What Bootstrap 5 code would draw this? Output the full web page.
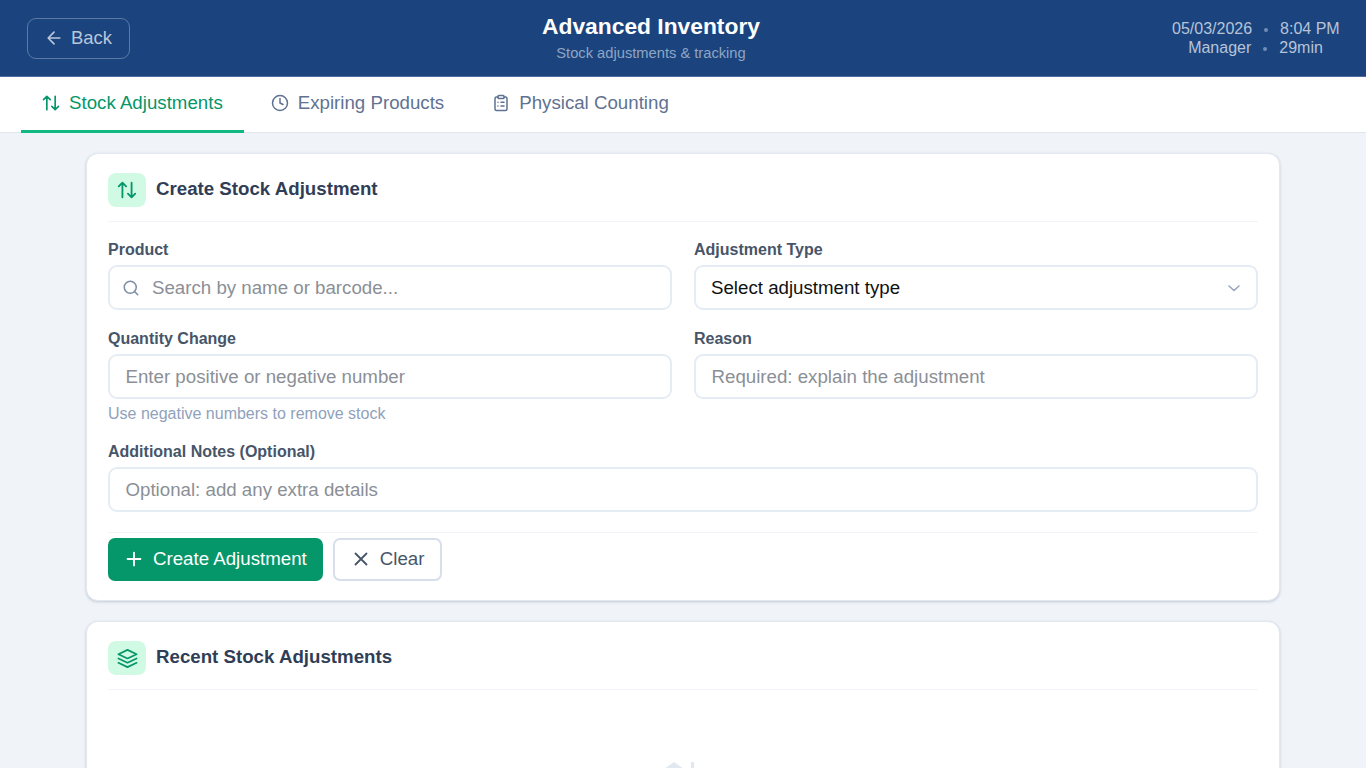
<!DOCTYPE html>
<html lang="en"><head><meta charset="utf-8"><title>Advanced Inventory</title>
<link href="https://cdn.jsdelivr.net/npm/bootstrap@5.3.0/dist/css/bootstrap.min.css" rel="stylesheet">
<style>
html,body{height:100%;overflow:hidden}
body{background:#f0f4f9;font-family:"Liberation Sans",Arial,sans-serif;color:#2d3b52}
.app-head{height:77px;background:#1b447e;border-bottom:1px solid #4a6c9e;padding:0 27px}
.head-side{width:103px}
.back-btn{width:103px;height:41px;color:#b9c6da;border:1px solid #5b7aa6;border-radius:9px;font-size:18.4px;background:transparent;padding:0;gap:8px}
.head-mid{padding-bottom:2px}
.head-title{font-size:22.8px;font-weight:700;color:#fff;line-height:27px}
.head-sub{font-size:14.7px;color:#8fa5c4;line-height:18px;margin-top:4px}
.head-meta{font-size:16px;line-height:19px;color:#b6c3d8;width:167px;white-space:nowrap}
.dot-sep{display:inline-block;width:4px;height:4px;border-radius:50%;background:#6f8db5;margin:0 12px;vertical-align:middle}
.tab-bar{height:56px;background:#fff;border-bottom:1px solid #dfe6f0;padding-left:21px}
.tab-link{height:56px;padding:0 21px 1px 21px;font-size:18.7px;color:#5f7291;gap:9px;border-bottom:3px solid transparent;margin-right:6px;text-decoration:none}
.tab-link.on{color:#059669;border-bottom-color:#10b981;margin-bottom:-1px;height:56px}
.ico-18{width:18px;height:18px;flex:none}
.ico-20{width:20px;height:20px;margin:0 -1px;flex:none}
.ico-22{width:22px;height:22px;margin:0 -2px;flex:none}
.page-wrap{width:1194px;margin:20px auto 0}
.panel-box{background:#fff;border:1px solid #e2e8f0;border-radius:12px;box-shadow:0 1px 3px rgba(30,50,90,.22);padding:19px 21px 19px;margin-bottom:20px}
.panel-top{padding-bottom:14px;margin-bottom:19px;border-bottom:1px solid #f1f5f9;gap:10px}
.tile{width:38px;height:34px;border-radius:8px;background:#d1fae5;color:#059669}
.tile-arrows{width:22px;height:22px}
.tile-layers{width:23px;height:23px}
.panel-name{font-size:18.7px;font-weight:700;color:#2f3e56;margin:0;padding-bottom:1px}
.fld-label{font-size:16px;font-weight:700;color:#475569;line-height:18px;margin-bottom:6px;display:block}
.fld{height:45px;border:2px solid #e6ecf4;border-radius:9px;font-size:18.7px;padding:0 15.5px;color:#111;box-shadow:none}
.fld::placeholder{color:#8b8f96;opacity:1}
.fld-search{padding-left:42px}
.search-ico{position:absolute;left:14px;top:14px;color:#7d8da5}
.fld-select{--bs-form-select-bg-img:none;padding:2px 15px 0;background-image:url("data:image/svg+xml,%3Csvg xmlns='http://www.w3.org/2000/svg' viewBox='0 0 16 16'%3E%3Cpath fill='none' stroke='%2394a3b8' stroke-width='1.5' stroke-linecap='round' stroke-linejoin='round' d='M3 6l5 4.5L13 6'/%3E%3C/svg%3E");background-position:right 14px center;background-size:16px 16px;color:#111}
.fld-hint{font-size:16px;color:#8fa1bb;line-height:18px;margin-top:6px}
.form-gap{--bs-gutter-x:22px;--bs-gutter-y:0}
.gap-row{margin-top:20px}
.gap-notes{margin-top:20px}
.act-bar{border-top:1px solid #f1f5f9;margin-top:20px;padding-top:5px;gap:10px}
.act-main{height:43px;background:#059669;border:0;border-radius:7px;color:#fff;font-size:18.7px;padding:0 16px 1px 17px;gap:10px}
.act-alt{height:43px;background:#fff;border:2px solid #d8dfea;border-radius:7px;color:#475569;font-size:18.7px;padding:0 16px 1px 17px;gap:10px}
.empty-zone{height:200px;padding-top:51px;text-align:center;color:#e2e8f0}
</style></head><body>
<header class="app-head d-flex align-items-center justify-content-between">
  <div class="head-side"><button class="back-btn btn d-flex align-items-center justify-content-center" type="button">
    <svg class="ico-20" viewBox="0 0 24 24" fill="none" stroke="currentColor" stroke-width="2" stroke-linecap="round" stroke-linejoin="round"><path d="M19 12H5M12 19l-7-7 7-7"/></svg>Back</button></div>
  <div class="text-center head-mid"><div class="head-title">Advanced Inventory</div><div class="head-sub">Stock adjustments &amp; tracking</div></div>
  <div class="head-meta text-center"><div>05/03/2026<span class="dot-sep"></span>8:04 PM</div><div>Manager<span class="dot-sep"></span>29min</div></div>
</header>
<nav class="tab-bar d-flex">
  <a class="tab-link on d-flex align-items-center" href="#"><svg class="ico-20" viewBox="0 0 24 24" fill="none" stroke="currentColor" stroke-width="2" stroke-linecap="round" stroke-linejoin="round"><path d="m21 16-4 4-4-4M17 20V4M3 8l4-4 4 4M7 4v16"/></svg>Stock Adjustments</a>
  <a class="tab-link d-flex align-items-center" href="#"><svg class="ico-18" viewBox="0 0 24 24" fill="none" stroke="currentColor" stroke-width="2" stroke-linecap="round" stroke-linejoin="round"><circle cx="12" cy="12" r="10"/><path d="M12 6v6l4 2"/></svg>Expiring Products</a>
  <a class="tab-link d-flex align-items-center" href="#"><svg class="ico-18" viewBox="0 0 24 24" fill="none" stroke="currentColor" stroke-width="2" stroke-linecap="round" stroke-linejoin="round"><rect x="8" y="2" width="8" height="4" rx="1"/><path d="M16 4h2a2 2 0 0 1 2 2v14a2 2 0 0 1-2 2H6a2 2 0 0 1-2-2V6a2 2 0 0 1 2-2h2M12 11h4M12 16h4M8 11h.01M8 16h.01"/></svg>Physical Counting</a>
</nav>
<main class="page-wrap">
  <section class="panel-box">
    <div class="panel-top d-flex align-items-center"><span class="tile d-flex align-items-center justify-content-center"><svg class="tile-arrows" viewBox="0 0 24 24" fill="none" stroke="currentColor" stroke-width="2" stroke-linecap="round" stroke-linejoin="round"><path d="m21 16-4 4-4-4M17 20V4M3 8l4-4 4 4M7 4v16"/></svg></span><h2 class="panel-name">Create Stock Adjustment</h2></div>
    <form>
      <div class="row form-gap">
        <div class="col-6"><label class="fld-label">Product</label><div class="position-relative"><svg class="search-ico" width="18" height="18" viewBox="0 0 24 24" fill="none" stroke="currentColor" stroke-width="2" stroke-linecap="round" stroke-linejoin="round"><circle cx="11" cy="11" r="8"/><path d="m21 21-4.3-4.3"/></svg><input class="form-control fld fld-search" placeholder="Search by name or barcode..."></div></div>
        <div class="col-6"><label class="fld-label">Adjustment Type</label><select class="form-select fld fld-select"><option>Select adjustment type</option></select></div>
      </div>
      <div class="row form-gap gap-row">
        <div class="col-6"><label class="fld-label">Quantity Change</label><input class="form-control fld" placeholder="Enter positive or negative number"><div class="fld-hint">Use negative numbers to remove stock</div></div>
        <div class="col-6"><label class="fld-label">Reason</label><input class="form-control fld" placeholder="Required: explain the adjustment"></div>
      </div>
      <div class="gap-notes"><label class="fld-label">Additional Notes (Optional)</label><input class="form-control fld" placeholder="Optional: add any extra details"></div>
      <div class="act-bar d-flex">
        <button class="act-main btn d-flex align-items-center" type="button"><svg class="ico-22" viewBox="0 0 24 24" fill="none" stroke="currentColor" stroke-width="2" stroke-linecap="round"><path d="M5 12h14M12 5v14"/></svg>Create Adjustment</button>
        <button class="act-alt btn d-flex align-items-center" type="button"><svg class="ico-22" viewBox="0 0 24 24" fill="none" stroke="currentColor" stroke-width="2" stroke-linecap="round"><path d="M18 6 6 18M6 6l12 12"/></svg>Clear</button>
      </div>
    </form>
  </section>
  <section class="panel-box">
    <div class="panel-top d-flex align-items-center"><span class="tile d-flex align-items-center justify-content-center"><svg class="tile-layers" viewBox="0 0 24 24" fill="none" stroke="currentColor" stroke-width="1.8" stroke-linecap="round" stroke-linejoin="round"><path d="M12 3 2.5 7.5 12 12l9.5-4.5z"/><path d="m2.5 12 9.5 4.5 9.5-4.5M2.5 16.5 12 21l9.5-4.5"/></svg></span><h2 class="panel-name">Recent Stock Adjustments</h2></div>
    <div class="empty-zone"><svg width="64" height="64" viewBox="0 0 64 64" fill="currentColor"><path d="M23 2 33 9H13zM40 2h3v40h-3z"/></svg></div>
  </section>
</main>
</body></html>
